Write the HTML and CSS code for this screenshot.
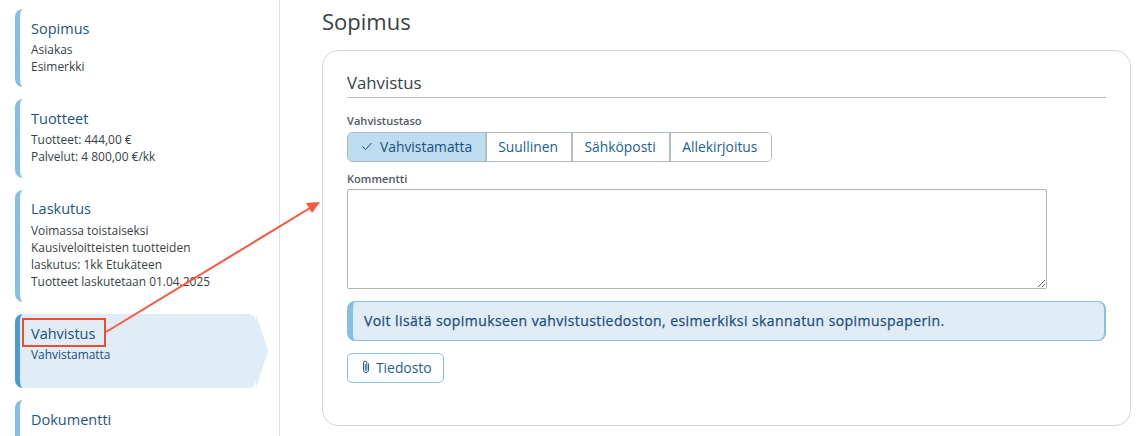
FILE: index.html
```html
<!DOCTYPE html>
<html lang="fi">

<head>
    <meta charset="utf-8">
    <meta name="viewport" content="width=device-width, initial-scale=1.0">
    <title>Sopimus</title>
    <link rel="stylesheet" href="styles.css">
</head>

<body>
    <div class="page">
        <aside class="sidebar">
            <a class="step">
                <h3>Sopimus</h3>
                <p>Asiakas<br>Esimerkki</p>
            </a>
            <a class="step">
                <h3>Tuotteet</h3>
                <p>Tuotteet: 444,00 €<br>Palvelut: 4 800,00 €/kk</p>
            </a>
            <a class="step">
                <h3>Laskutus</h3>
                <p>Voimassa toistaiseksi<br>Kausiveloitteisten tuotteiden<br>laskutus: 1kk Etukäteen<br>Tuotteet laskutetaan 01.04.2025</p>
            </a>
            <a class="step step-active">
                <h3>Vahvistus</h3>
                <p>Vahvistamatta</p>
            </a>
            <a class="step">
                <h3>Dokumentti</h3>
                <p>&nbsp;</p>
            </a>
        </aside>

        <main class="content">
            <h1>Sopimus</h1>
            <section class="panel">
                <h2>Vahvistus</h2>

                <label class="field-label">Vahvistustaso</label>
                <div class="btn-group">
                    <button class="choice choice-on">
                        <svg width="12" height="12" viewBox="0 0 12 12"><path d="M1.5 6.5 L4.5 9.5 L10.5 3" fill="none" stroke="#1d4f7c" stroke-width="1"/></svg>
                        Vahvistamatta
                    </button>
                    <button class="choice">Suullinen</button>
                    <button class="choice">Sähköposti</button>
                    <button class="choice">Allekirjoitus</button>
                </div>

                <label class="field-label field-label-second">Kommentti</label>
                <textarea class="comment"></textarea>

                <div class="notice">Voit lisätä sopimukseen vahvistustiedoston, esimerkiksi skannatun sopimuspaperin.</div>

                <button class="file-btn">
                    <svg width="10" height="14" viewBox="0 0 10 14"><path d="M7.5 3.5 V10 A2.5 2.5 0 0 1 2.5 10 V3 A1.7 1.7 0 0 1 5.9 3 V9.6 A0.8 0.8 0 0 1 4.3 9.6 V4" fill="none" stroke="#1d5f92" stroke-width="1"/></svg>
                    Tiedosto
                </button>
            </section>
        </main>
    </div>

    <!-- ohjeen korostus kuvakaappauksen paalla -->
    <div class="callout-box"></div>
    <svg class="callout-arrow" width="1140" height="436" viewBox="0 0 1140 436">
        <line x1="106" y1="332" x2="310" y2="208" stroke="#f9573f" stroke-width="2"/>
        <polygon points="320,202 312,213 306,203" fill="#f9573f"/>
    </svg>
</body>

</html>
```

FILE: styles.css
```css
html,
body {
    margin: 0;
    height: 100%;
    overflow: hidden;
}

body {
    font-family: "Open Sans", sans-serif;
    color: #3a3f45;
    background-color: #fff;
}

.page {
    display: flex;
    height: 436px;
}

.sidebar {
    box-sizing: border-box;
    width: 280px;
    flex-shrink: 0;
    height: 436px;
    padding: 9px 0 0 15px;
    border-right: 1px solid #dfe2e5;
    overflow: hidden;
}

.step {
    display: block;
    position: relative;
    box-sizing: border-box;
    width: 241px;
    padding: 9.6px 0 12.4px 11px;
    margin-bottom: 12px;
    border-left: 5px solid #85bfe3;
    border-radius: 8px;
}

.step h3 {
    margin: 0 0 2.4px;
    font-size: 14.5px;
    line-height: 20px;
    font-weight: 400;
    color: #1d5580;
}

.step p {
    margin: 0;
    font-size: 11.95px;
    line-height: 17px;
}

.step-active {
    height: 74px;
    background-color: #e0ecf6;
    border-left-color: #4b9bd1;
}

.step-active::after {
    content: "";
    position: absolute;
    top: 0;
    left: 100%;
    border-left: 12px solid #e0ecf6;
    border-top: 37px solid transparent;
    border-bottom: 37px solid transparent;
}

.step-active h3,
.step-active p {
    color: #1d4f7c;
}

.content {
    flex: 1;
    padding: 7px 9px 0 42px;
}

h1 {
    margin: 0 0 15px;
    font-size: 22px;
    line-height: 28px;
    font-weight: 400;
}

.panel {
    box-sizing: border-box;
    height: 376px;
    padding: 20px 24px;
    border: 1px solid #d3d7da;
    border-radius: 16px;
}

h2 {
    margin: 0 0 16px;
    padding-bottom: 3px;
    font-size: 16.8px;
    line-height: 23px;
    font-weight: 400;
    border-bottom: 1px solid #b5babd;
}

.field-label {
    display: block;
    font-size: 11.1px;
    line-height: 14px;
    font-weight: 600;
    color: #55595e;
    margin-bottom: 4px;
}

.field-label-second {
    margin-top: 10px;
    margin-bottom: 3px;
}

.btn-group {
    display: flex;
    width: fit-content;
    height: 30px;
    border: 1px solid #aeb9c1;
    border-radius: 5px;
    box-sizing: border-box;
    overflow: hidden;
}

.choice {
    display: flex;
    align-items: center;
    gap: 7px;
    padding: 0 13.5px 2px 11px;
    border: none;
    border-left: 2px solid #b4bec6;
    background-color: #fff;
    font-family: "Open Sans", sans-serif;
    font-size: 13.85px;
    color: #1d5f92;
}

.choice:first-child {
    border-left: none;
    padding: 0 13px 2px;
}

.choice-on {
    background-color: #bcdcf0;
    color: #1d4f7c;
}

.comment {
    display: block;
    box-sizing: border-box;
    width: 700px;
    height: 100px;
    margin: 0 0 12px;
    border: 1px solid #aeb6bc;
    border-radius: 2px;
}

.notice {
    box-sizing: border-box;
    height: 40px;
    padding-left: 11px;
    margin-bottom: 12px;
    border: 1px solid #85bfe3;
    border-left-width: 6px;
    border-right-width: 2px;
    border-radius: 8px;
    background-color: #e0ecf6;
    font-size: 14px;
    letter-spacing: 0.42px;
    -webkit-text-stroke: 0.25px #1d4f7c;
    line-height: 38px;
    color: #1d4f7c;
}

.file-btn {
    display: flex;
    align-items: center;
    gap: 5px;
    box-sizing: border-box;
    height: 30px;
    padding: 0 11px 2px 13px;
    border: 1px solid #85bfe3;
    border-radius: 5px;
    background-color: #fff;
    font-family: "Open Sans", sans-serif;
    font-size: 13.85px;
    color: #1d5f92;
}

.callout-box {
    position: absolute;
    left: 22px;
    top: 318px;
    box-sizing: border-box;
    width: 84px;
    height: 29px;
    border: 2px solid #f04a2f;
}

.callout-arrow {
    position: absolute;
    left: 0;
    top: 0;
    pointer-events: none;
}
```
